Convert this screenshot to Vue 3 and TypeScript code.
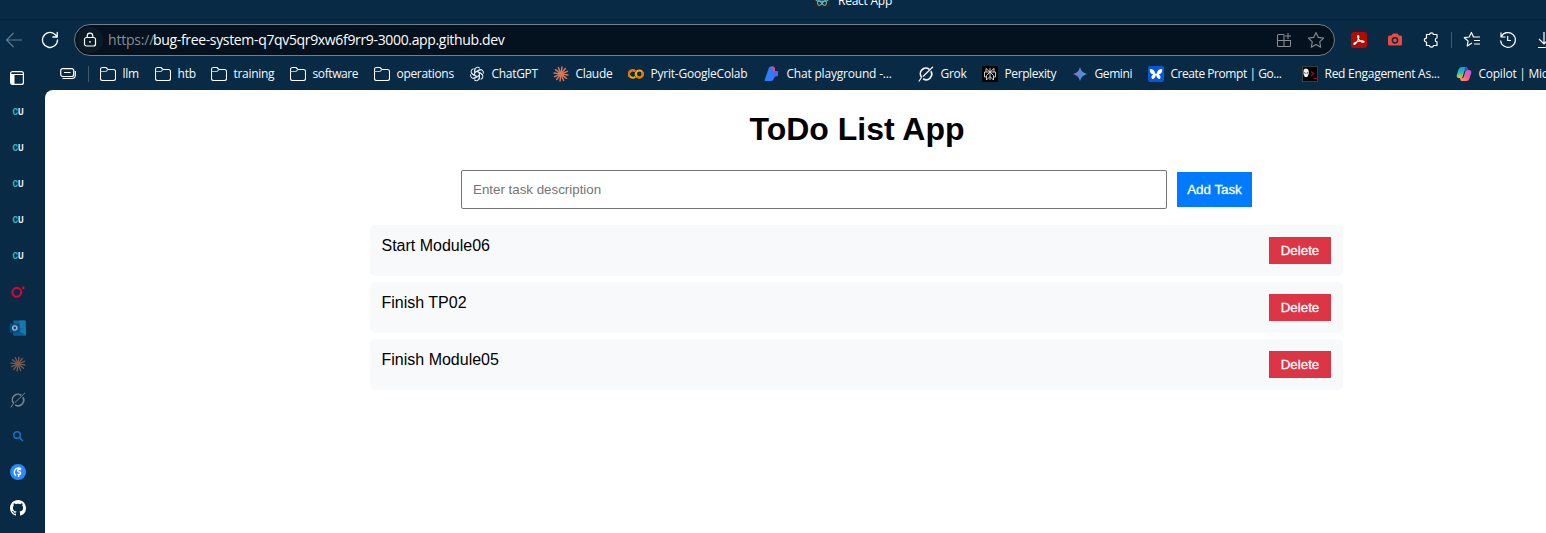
<script setup lang="ts">
import { ref } from 'vue'

interface Bookmark {
  label: string
  icon: string
  span: number
  tracking: number
}

const bookmarks: Bookmark[] = [
  { label: 'llm', icon: 'folder', span: 55, tracking: -0.25 },
  { label: 'htb', icon: 'folder', span: 56, tracking: -0.2 },
  { label: 'training', icon: 'folder', span: 79, tracking: -0.3 },
  { label: 'software', icon: 'folder', span: 84, tracking: -0.4 },
  { label: 'operations', icon: 'folder', span: 95, tracking: -0.32 },
  { label: 'ChatGPT', icon: 'chatgpt', span: 84, tracking: -0.3 },
  { label: 'Claude', icon: 'claude', span: 75, tracking: -0.3 },
  { label: 'Pyrit-GoogleColab', icon: 'colab', span: 136, tracking: -0.22 },
  { label: 'Chat playground -...', icon: 'azure', span: 154, tracking: -0.2 },
  { label: 'Grok', icon: 'grok', span: 64, tracking: -0.3 },
  { label: 'Perplexity', icon: 'perplexity', span: 90, tracking: -0.4 },
  { label: 'Gemini', icon: 'gemini', span: 76, tracking: -0.4 },
  { label: 'Create Prompt | Go...', icon: 'butterfly', span: 154, tracking: -0.45 },
  { label: 'Red Engagement As...', icon: 'red', span: 154, tracking: -0.27 },
  { label: 'Copilot | Mic', icon: 'copilot', span: 90, tracking: -0.25 },
]

const sideTabs = ['cu', 'cu', 'cu', 'cu', 'cu', 'ring', 'outlook', 'claude', 'grok', 'search', 'steps', 'github']

const tasks = ref<string[]>(['Start Module06', 'Finish TP02', 'Finish Module05'])
const draft = ref('')
const rays = [0, 30, 60, 90, 120, 150, 180, 210, 240, 270, 300, 330]
const petals = [0, 60, 120, 180, 240, 300]

function addTask() {
  if (draft.value.trim()) tasks.value.push(draft.value.trim())
  draft.value = ''
}
function removeTask(index: number) {
  tasks.value.splice(index, 1)
}
</script>

<template>
  <div class="window">
    <div class="tabstrip">
      <svg class="tab-icon" width="16" height="16" viewBox="0 0 16 16">
        <rect width="16" height="16" fill="#252725" />
        <g fill="none" stroke="#58c4dc" stroke-width="1">
          <ellipse cx="8" cy="8" rx="7" ry="2.7" />
          <ellipse cx="8" cy="8" rx="7" ry="2.7" transform="rotate(60 8 8)" />
          <ellipse cx="8" cy="8" rx="7" ry="2.7" transform="rotate(120 8 8)" />
        </g>
        <circle cx="8" cy="8" r="1.4" fill="#58c4dc" />
      </svg>
      <span class="tab-title">React App</span>
    </div>

    <div class="toolbar">
      <svg class="back" width="18" height="18" viewBox="0 0 18 18" fill="none" stroke="#647d91" stroke-width="1.1">
        <path d="M17 9H1.5M8.5 2L1.5 9l7 7" />
      </svg>
      <svg class="reload" width="18" height="18" viewBox="0 0 18 18" fill="none" stroke="#fff" stroke-width="1.3" stroke-linecap="round">
        <path d="M16.5 9A7.5 7.5 0 1 1 13.8 3.2L16 5.5M16.2 1.5V6H11.8" />
      </svg>
      <div class="address">
        <span class="lock">
          <svg width="14" height="16" viewBox="0 0 14 16" fill="none" stroke="#fff" stroke-width="1.2">
            <rect x="1.5" y="5.5" width="11" height="8.5" rx="2" />
            <path d="M4.2 5.5V4a2.8 2.8 0 0 1 5.6 0v1.5" />
            <circle cx="7" cy="9.8" r=".9" fill="#fff" stroke="none" />
          </svg>
        </span>
        <span class="scheme">https://</span><span class="host">bug-free-system-q7qv5qr9xw6f9rr9-3000.app.github.dev</span>
        <svg class="apps" width="16" height="16" viewBox="0 0 16 16" fill="none" stroke="#858b90" stroke-width="1.1">
          <path d="M8 2.5H2.5Q1.5 2.5 1.5 3.5V13.5Q1.5 14.5 2.5 14.5H13.5Q14.5 14.5 14.5 13.5V8.5H1.5M8 2.5V14.5M12 1V7M9 4H15" />
        </svg>
        <svg class="star" width="18" height="18" viewBox="0 0 18 18" fill="none" stroke="#858b90" stroke-width="1.1" stroke-linejoin="round">
          <path d="M9 1.5l2.3 4.9 5.3.7-3.9 3.7 1 5.4L9 13.6l-4.7 2.6 1-5.4L1.4 7.1l5.3-.7z" />
        </svg>
      </div>
      <div class="extensions">
        <svg width="16" height="16" viewBox="0 0 16 16">
          <rect width="16" height="16" rx="2.5" fill="#b30b00" />
          <path d="M3.4 12.4C4.8 12 7.8 8 7.8 4.8c0-1.7-1.6-1.5-1.1.3.8 3 3.4 5.200 5.600 5.100 1.500-.2.6-1.500-1.600-1.400-2.500.1-5 .8-6.800 2-1.200.8-1.300 1.500-.5 1.600z" fill="none" stroke="#fff" stroke-width="1.2" />
        </svg>
        <svg width="16" height="16" viewBox="0 0 16 16">
          <path d="M2.500 3.500h2L6 1.500h4.500L12 3.500h1.500q1.500 0 1.500 1.500v7q0 1.500-1.500 1.500h-11Q1 13.500 1 12V5q0-1.500 1.500-1.500z" fill="#e84b41" />
          <circle cx="8" cy="8.300" r="2.600" fill="#e84b41" stroke="#102a43" stroke-width="1.500" />
        </svg>
        <svg width="16" height="16" viewBox="0 0 16 16" fill="none" stroke="#fff" stroke-width="1.200" stroke-linejoin="round">
          <path d="M3.500 2.500H6.700C6.600.3 10.400.3 10.300 2.500H14V6C11.800 6 11.800 9.800 14 9.800V13.500H10.500C10.400 15.700 6.600 15.700 6.500 13.500H3.500V10C.7 10.100.7 6.100 3.500 6.200z" />
        </svg>
        <i class="tool-divider"></i>
        <svg width="18" height="18" viewBox="0 0 18 18" fill="none" stroke="#fff" stroke-width="1.200" stroke-linejoin="round">
          <path d="M9 11.900L4.200 15l.9-5L1.300 6.700l4.900-.7L8.400 1.500l2.100 4.500H17M11 9.500h6M11 13h6" />
        </svg>
        <svg width="18" height="18" viewBox="0 0 18 18" fill="none" stroke="#fff" stroke-width="1.200">
          <path d="M2.200 6A7.400 7.400 0 1 1 1.600 9.500M2 1.500V6H6.500M8.700 5V9.500H12" />
        </svg>
        <svg width="18" height="18" viewBox="0 0 18 18" fill="none" stroke="#fff" stroke-width="1.200">
          <path d="M9 1V13M4 8l5 5 5-5M3 16.500h12" />
        </svg>
      </div>
    </div>

    <div class="bookmark-row">
      <svg class="panel-toggle" width="14" height="14" viewBox="0 0 14 14">
        <rect x=".6" y=".6" width="12.800" height="12.800" rx="2" fill="none" stroke="#fff" stroke-width="1.200" />
        <path d="M1 3.500h12.500" stroke="#fff" />
        <path d="M1 4h3.500v9.500H2Q1 13.500 1 12z" fill="#fff" />
      </svg>
      <svg class="workspace" width="16" height="12" viewBox="0 0 16 12" fill="none" stroke="#fff" stroke-width="1.200">
        <rect x=".7" y=".7" width="13" height="7.800" rx="2" />
        <path d="M4 4.500h6.500M2.500 10.500H12Q15.300 10.500 15.300 7V3" />
      </svg>
      <i class="bookmark-divider"></i>
      <div v-for="mark in bookmarks" :key="mark.label" class="bookmark" :style="{ width: mark.span + 'px' }">
        <svg width="16" height="16" viewBox="0 0 16 16">
          <g v-if="mark.icon === 'folder'" fill="none" stroke="#fff" stroke-width="1.100">
            <path d="M2.500 1.500H6L8 3.500H13.500Q15.500 3.500 15.500 5.500V12.500Q15.500 14.500 13.500 14.500H2.500Q.5 14.500.5 12.500V3.500Q.5 1.500 2.500 1.500z" />
            <path d="M.5 5.500H6L8 3.500" stroke="#b1bdc7" />
          </g>
          <g v-else-if="mark.icon === 'chatgpt'" fill="none" stroke="#dce4e9" stroke-width="1.100">
            <path v-for="a in petals" :key="a" :transform="`rotate(${a} 8 8)`" d="M5.600 9.400V4.200A3 3 0 0 1 10.800 2.300M5.600 6.600L9.800 4.200A3 3 0 0 1 12 3.900" />
          </g>
          <g v-else-if="mark.icon === 'claude'" stroke="#d97757" stroke-width="1.500" stroke-linecap="round">
            <path v-for="a in rays" :key="a" :transform="`rotate(${a + 8} 8 8)`" d="M8 7.500V1" />
          </g>
          <g v-else-if="mark.icon === 'colab'" fill="none" stroke-width="2.200">
            <path d="M7.200 5.300A3.700 3.700 0 1 0 7.200 10.700" stroke="#f9ab00" />
            <path d="M7 5.100A3.700 3.700 0 0 0 2.200 10.800" stroke="#e8710a" />
            <circle cx="11.300" cy="8" r="3.500" stroke="#f9ab00" />
            <path d="M13.800 5.500A3.500 3.500 0 0 1 8.800 10.500" stroke="#e8710a" />
          </g>
          <g v-else-if="mark.icon === 'azure'">
            <path d="M5 1.500Q5.500.5 7 .5h2Q11 .5 11 3v2H13.500Q14 5 14 6V9.500Q13.500 10.500 11 10.500L9 14Q8.500 15 7 15H1.500Q.3 15 .8 13.500z" fill="#2f7cf6" />
            <path d="M7.500.5H9Q10.500.5 11 3V5.500H9z" fill="#ef3f96" />
            <path d="M9.500 5.500H13.500L14 9.500 11 10.500 9 10z" fill="#5266ee" />
          </g>
          <g v-else-if="mark.icon === 'grok'" fill="none" stroke="#f1f4f6" stroke-width="1.700">
            <path d="M11.300 3.400A5.500 5.500 0 0 0 3.800 11.400M12.800 5.200A5.500 5.500 0 0 1 5.200 12.800" />
            <path d="M.8 15.500L3.500 11.500M5 10.500L15 .8" stroke-width="1.200" />
          </g>
          <g v-else-if="mark.icon === 'perplexity'">
            <rect width="16" height="16" fill="#050505" />
            <path d="M8 2v12M4 2.500L8 6l4-3.500V6M4 2.500V6M2.500 6h11v5h-2M4.500 11h-2V6M8 6l-3.500 3.500V14L8 10.500 11.500 14V9.500z" fill="none" stroke="#dedbd2" stroke-width=".9" />
          </g>
          <g v-else-if="mark.icon === 'gemini'">
            <defs><linearGradient id="gem"><stop offset="0" stop-color="#b56ac4" /><stop offset=".5" stop-color="#5685db" /><stop offset="1" stop-color="#4aa8de" /></linearGradient></defs>
            <path d="M8 1Q9.300 6.700 15 8Q9.300 9.300 8 15Q6.700 9.300 1 8Q6.700 6.700 8 1z" fill="url(#gem)" />
          </g>
          <g v-else-if="mark.icon === 'butterfly'">
            <rect width="16" height="16" rx="2" fill="#0757db" />
            <path d="M7.400 7.500C6.500 4 3.500 2.500 1.800 3.300 1.500 6.500 3 8.200 5.600 8.500 3.500 9 2.800 11.500 4.300 13 6.500 13 7.300 11.300 8 9c.7 2.300 1.500 4 3.700 4 1.500-1.500.8-4-1.300-4.500 2.600-.3 4.100-2 3.800-5.200C12.500 2.500 9.500 4 8.600 7.500L8 8.300z" fill="#fff" />
          </g>
          <g v-else-if="mark.icon === 'red'">
            <rect x=".5" y=".5" width="15" height="15" fill="#050505" stroke="#3b3d3d" />
            <path d="M1.500 5Q1.500 2.500 4 2.500t2.700 2.500v3L5.300 11h-2.500L1.500 8z" fill="#f2f2f2" />
            <path d="M2.300 6l1.300 1v1L2.300 7zM6 6L4.700 7v1L6 7z" fill="#111" />
            <path d="M9 5.500l2.500 2L9 10M11.500 12.500H15" fill="none" stroke="#a40d12" stroke-width="1.200" />
          </g>
          <g v-else>
            <defs>
              <linearGradient id="copA" x1="0" y1="0" x2="0" y2="1"><stop stop-color="#119bf5" /><stop offset=".5" stop-color="#27bdac" /><stop offset="1" stop-color="#f6c52d" /></linearGradient>
              <linearGradient id="copB" x1="1" y1="0" x2="0" y2="1"><stop stop-color="#b659ed" /><stop offset=".5" stop-color="#f35d91" /><stop offset="1" stop-color="#ff9d5b" /></linearGradient>
            </defs>
            <path d="M5.500 1H10Q11.200 1 11.700 2.500L12.200 4H10Q8.700 4 8.200 5.500L6.700 10.500Q6.200 12 4.500 12H3Q.2 12 .8 9L2.500 3.500Q3.300 1 5.500 1z" fill="url(#copA)" />
            <path d="M10.500 15H6Q4.800 15 4.300 13.500L3.800 12H6Q7.300 12 7.800 10.500L9.300 5.500Q9.800 4 11.500 4H13Q15.800 4 15.200 7L13.500 12.500Q12.700 15 10.500 15z" fill="url(#copB)" />
            <path d="M9 1h1Q11.200 1 11.700 2.500L12.200 4H8.500z" fill="#2653c7" />
          </g>
        </svg>
        <span class="label" :style="{ letterSpacing: mark.tracking + 'px' }">{{ mark.label }}</span>
      </div>
    </div>

    <div class="body">
      <nav class="sidebar">
        <div v-for="(tab, i) in sideTabs" :key="i" class="side-tab">
          <span v-if="tab === 'cu'" class="cu"><b>C</b>U</span>
          <svg v-else width="16" height="16" viewBox="0 0 16 16">
            <g v-if="tab === 'ring'">
              <circle cx="6.800" cy="8.300" r="4.400" fill="none" stroke="#cf0734" stroke-width="2.200" />
              <circle cx="13.200" cy="4" r="1.400" fill="#cf0734" />
            </g>
            <g v-else-if="tab === 'outlook'">
              <rect x="3.500" y=".5" width="12" height="15" fill="#12679b" />
              <path d="M9.500.5H15.500V8H9.500z" fill="#177aad" />
              <path d="M3 8l6 4 7-4v7.500H3z" fill="#095a93" />
              <path d="M16 7v8.500L9 11z" fill="#127baf" />
              <rect y="3.500" width="9.500" height="9" fill="#074c84" />
              <circle cx="4.800" cy="8" r="2.100" fill="none" stroke="#a7bac6" stroke-width="1.400" />
            </g>
            <g v-else-if="tab === 'claude'" stroke="#80594f" stroke-width="1.300" stroke-linecap="round">
              <path v-for="a in rays" :key="a" :transform="`rotate(${a + 8} 8 8)`" d="M8 7.500V1" />
            </g>
            <g v-else-if="tab === 'grok'" fill="none" stroke="#768794" stroke-width="1.600">
              <path d="M11.300 3.400A5.500 5.500 0 0 0 3.800 11.400M12.800 5.200A5.500 5.500 0 0 1 5.200 12.800" />
              <path d="M.8 15.500L3.500 11.500M5 10.500L15 .8" stroke-width="1" />
            </g>
            <g v-else-if="tab === 'search'" fill="none" stroke="#1672c4" stroke-width="1.600">
              <circle cx="7" cy="7" r="3.300" /><path d="M9.500 9.500l3.500 3.500" />
            </g>
            <g v-else-if="tab === 'steps'">
              <circle cx="8" cy="8" r="8" fill="#298aff" />
              <path d="M11 4.800A4.200 4.200 0 1 0 6 11.600M11 6Q9.300 4.800 8 5.600Q6.900 6.800 8.500 7.700Q11 8 10.500 9.700Q9.500 11 7.500 10.200M8.600 10.500v2.500" fill="none" stroke="#fff" stroke-width="1.400" />
            </g>
            <path v-else fill="#fff" d="M8 0C3.580 0 0 3.580 0 8c0 3.540 2.290 6.530 5.470 7.590.4.070.55-.17.55-.38 0-.19-.01-.82-.01-1.490-2.010.37-2.530-.49-2.690-.94-.09-.23-.48-.94-.82-1.130-.28-.15-.68-.52-.01-.53.63-.01 1.080.58 1.230.82.72 1.210 1.870.87 2.330.66.07-.52.28-.87.51-1.070-1.780-.2-3.640-.89-3.640-3.950 0-.87.31-1.590.82-2.150-.08-.2-.36-1.020.08-2.120 0 0 .67-.21 2.200.82.64-.18 1.320-.27 2-.27s1.360.09 2 .27c1.530-1.040 2.200-.82 2.200-.82.44 1.100.16 1.920.08 2.120.51.56.82 1.270.82 2.150 0 3.070-1.870 3.750-3.650 3.950.29.25.54.73.54 1.480 0 1.070-.01 1.930-.01 2.200 0 .21.15.46.55.38A8.010 8.010 0 0 0 16 8c0-4.420-3.580-8-8-8z" />
          </svg>
        </div>
      </nav>
      <main class="page">
        <div class="todo">
          <h1>ToDo List App</h1>
          <form class="entry" @submit.prevent="addTask">
            <input v-model="draft" type="text" placeholder="Enter task description" />
            <button class="add" type="submit">Add Task</button>
          </form>
          <ul>
            <li v-for="(task, i) in tasks" :key="task">
              <span>{{ task }}</span>
              <button class="delete" type="button" @click="removeTask(i)">Delete</button>
            </li>
          </ul>
        </div>
      </main>
    </div>
  </div>
</template>

<style>
body { margin: 0; overflow: hidden; }
</style>

<style scoped>
.window { width: 1546px; height: 533px; overflow: hidden; display: flex; flex-direction: column; background: #082a45; color: #fff; font-family: "Open Sans", "Noto Sans", sans-serif; }
svg { display: block; flex: none; }
.tabstrip { height: 19px; flex: none; border-bottom: 1px solid #06233d; display: flex; padding-left: 814px; overflow: hidden; }
.tab-icon { margin-top: -9px; }
.tab-title { margin: -8px 0 0 8px; font-size: 12px; line-height: 18px; letter-spacing: -.25px; }
.toolbar { height: 40px; flex: none; display: flex; align-items: center; }
.back { margin-left: 5px; }
.reload { margin-left: 18px; }
.address { box-sizing: border-box; width: 1261px; height: 32px; flex: none; margin-left: 15px; border: 1px solid #737f87; border-radius: 16px; background: #04111e; display: flex; align-items: center; font-size: 14px; }
.lock { width: 26px; height: 26px; margin-left: 2px; border-radius: 50%; background: #0d1b27; display: flex; justify-content: center; align-items: center; }
.scheme { width: 45px; margin-left: 5px; color: #898e93; letter-spacing: -.2px; }
.host { width: 400px; white-space: nowrap; letter-spacing: -.34px; }
.scheme, .host { margin-top: -1px; }
.apps { margin-left: auto; }
.star { margin: 0 9px 0 15px; }
.extensions { display: flex; align-items: center; flex: none; margin-left: 16px; }
.extensions svg:nth-child(2), .extensions svg:nth-child(3) { margin-left: 20px; }
.tool-divider { width: 1px; height: 16px; margin: 0 11px 0 12px; background: #405b70; }
.extensions svg:nth-child(6) { margin-left: 18px; }
.extensions svg:nth-child(7) { margin-left: 18px; }
.bookmark-row { height: 30px; flex: none; display: flex; align-items: flex-start; padding-top: 6px; box-sizing: border-box; }
.panel-toggle { margin: 5px 0 0 10px; }
.workspace { margin: 2px 0 0 36px; }
.bookmark-divider { width: 1px; height: 16px; margin: 0 11px 0 12px; background: #405b70; }
.bookmark { display: flex; align-items: center; flex: none; height: 16px; }
.label { margin-left: 6.500px; white-space: nowrap; font-size: 12px; line-height: 16px; color: #f7f9fa; }
.body { display: flex; flex: 1; min-height: 0; }
.sidebar { width: 45px; flex: none; padding-top: 4px; box-sizing: border-box; }
.side-tab { height: 36px; padding-right: 9px; display: flex; align-items: center; justify-content: center; }
.cu { margin-top: -1px; font: bold 8.500px Roboto, sans-serif; color: #eef2f6; }
.cu b { color: #2cb5b1; }
.page { flex: 1; background: #fff; border-top-left-radius: 8px; color: #000; font-family: "Liberation Sans", Arial, sans-serif; }
.todo { width: 973px; margin-left: 325px; }
h1 { margin: 0; padding: 20px 0 0 1px; font-size: 32px; line-height: 38px; text-align: center; }
.entry { display: flex; align-items: center; margin: 22px 0 16px 91px; }
input { box-sizing: border-box; width: 706px; height: 39px; margin: 0 10px 0 0; padding: 10px 11px; border: 1px solid #767676; border-radius: 2px; font: 13.333px "Liberation Sans", Arial, sans-serif; }
input::placeholder { color: #757575; }
button { border: 0; padding: 0; color: #fff; font: 13.333px "Liberation Sans", Arial, sans-serif; -webkit-text-stroke: .3px #fff; }
.add { width: 75px; height: 35px; background: #007bff; }
ul { margin: 0; padding: 0; list-style: none; display: grid; gap: 6px; }
li { box-sizing: border-box; height: 51px; padding: 12px 12px 12px 11.500px; border-radius: 5px; background: #f8f9fa; display: flex; justify-content: space-between; align-items: flex-start; font-size: 16px; line-height: 18px; }
.delete { width: 62px; height: 27px; background: #dc3545; }
</style>
